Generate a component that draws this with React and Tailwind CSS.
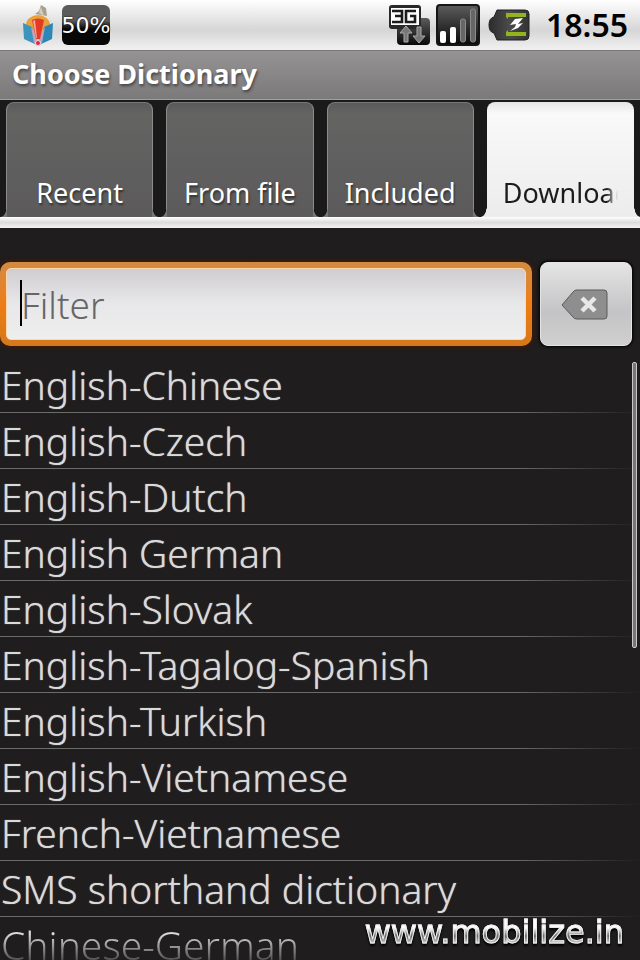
import React from "react";

const tabs = ["Recent", "From file", "Included", "Download"];

const dictionaries = [
  "English-Chinese",
  "English-Czech",
  "English-Dutch",
  "English German",
  "English-Slovak",
  "English-Tagalog-Spanish",
  "English-Turkish",
  "English-Vietnamese",
  "French-Vietnamese",
  "SMS shorthand dictionary",
  "Chinese-German",
];

function DictionaryIcon() {
  return (
    <svg width="32" height="44" viewBox="0 0 32 44" aria-hidden="true">
      <path d="M13 11l4-3 2-6 5 3 1 8z" fill="#aaa08f" />
      <path d="M17 10l2-6 3 9z" fill="#d6cdbd" />
      <ellipse cx="16" cy="22" rx="12" ry="10" fill="#eba13b" />
      <path d="M1 20l9 4 5 18L2 36z" fill="#3c93bb" />
      <path d="M31 20l-9 4-5 18 13-6z" fill="#2b87b3" />
      <path d="M9 24l4 6 3 8 3-8 4-6-3 16-4 3-4-3z" fill="#bfa3c1" />
      <path d="M10 17q6-3 12 0l-4 19h-4z" fill="#e23a24" />
      <path d="M11 18l2-1 2 18h-1z" fill="#f4a79b" />
      <circle cx="16" cy="40" r="2.500" fill="#d82748" stroke="#edd3dc" />
    </svg>
  );
}

function NetworkIcon() {
  return (
    <svg width="44" height="42" viewBox="0 0 44 42" aria-hidden="true">
      <defs>
        <linearGradient id="dark" x1="0" y1="0" x2="0" y2="1">
          <stop offset="0" stopColor="#5d5d5d" />
          <stop offset="1" stopColor="#080808" />
        </linearGradient>
      </defs>
      <rect x="9" y="14" width="33" height="27" rx="4" fill="url(#dark)" />
      <rect x="1" y="1" width="32" height="24" rx="3" fill="#292929" />
      <path d="M3 4h28v17H3z" fill="#fff" />
      <path d="M4 7h10v11H4M7 12h7M28 7H18v11h9v-6h-5" fill="none" stroke="#1c1c1c" strokeWidth="2.600" />
      <path d="M18 22l-6 7h4v9h4v-9h4zM31 39l-6-7h4v-9h4v9h4z" fill="#777" stroke="#aaa" />
    </svg>
  );
}

function SignalIcon() {
  return (
    <svg width="44" height="42" viewBox="0 0 44 42" aria-hidden="true">
      <rect x="1" y="1" width="42" height="40" rx="3" fill="url(#dark)" stroke="#161616" strokeWidth="2" />
      <rect x="4" y="27" width="6" height="12" rx="2" fill="#fff" />
      <rect x="14" y="23" width="6" height="16" rx="2" fill="#fff" />
      <rect x="24.500" y="15" width="5" height="23" rx="2" fill="#666" stroke="#8b8b8b" />
      <rect x="34.500" y="5" width="5" height="33" rx="2" fill="#666" stroke="#8b8b8b" />
    </svg>
  );
}

function BatteryIcon() {
  return (
    <svg width="42" height="32" viewBox="0 0 42 32" aria-hidden="true">
      <defs>
        <linearGradient id="cell" x1="0" y1="0" x2="1" y2="0">
          <stop offset="0" stopColor="#2c2c2c" />
          <stop offset=".5" stopColor="#4a4a4a" />
          <stop offset="1" stopColor="#333" />
        </linearGradient>
      </defs>
      <path d="M9 1h28q4 0 4 4v22q0 4-4 4H9l-3-7q-5-1-5-8t5-8z" fill="url(#cell)" stroke="#222" />
      <path d="M18 4h20v4H20v2l-2-2zM18 27h20v-4H20v-2l-2 2z" fill="#92b51c" />
      <path d="M35 9l-8 1-5 6 6-1-1 3-5 4 8-3 5-5-5 1z" fill="#fff" />
    </svg>
  );
}

function ClearIcon() {
  return (
    <svg width="50" height="34" viewBox="0 0 50 34" aria-hidden="true">
      <path d="M1 18L12 5q1-2 4-2h27q3 0 3 3v23q0 3-3 3H16q-3 0-4-2z" fill="#8e8e8e" stroke="#5a5a5a" />
      <path d="M21 11l13 13M34 11L21 24" stroke="#e8e8e8" strokeWidth="4.500" />
    </svg>
  );
}

function StatusBar() {
  return (
    <header className="flex h-[50px] items-center justify-between bg-linear-to-b from-white via-[#d6d6d6] via-60% to-[#f1f1f1] pr-3 pl-[22px]">
      <div className="flex items-center gap-2">
        <DictionaryIcon />
        <div className="flex h-10 w-12 items-center justify-center rounded-md bg-linear-to-b from-[#5b5b5b] from-40% to-[#080808] to-60% font-['DejaVu_Sans',sans-serif] text-[22px] text-white [text-shadow:0_0_2px_#000]">
          50%
        </div>
      </div>
      <div className="flex items-center gap-1">
        <NetworkIcon />
        <SignalIcon />
        <div className="flex items-center gap-4 pl-1">
          <BatteryIcon />
          <time className="text-[32px] leading-[50px] font-semibold text-black">18:55</time>
        </div>
      </div>
    </header>
  );
}

function TabBar() {
  return (
    <nav className="bg-[#1b1a1b]">
      <div role="tablist" className="grid grid-cols-4 gap-[13px] px-[6px] pt-[2px]">
        {tabs.map((label) => {
          const selected = label === "Download";
          return (
            <button
              key={label}
              type="button"
              role="tab"
              aria-selected={selected}
              className={
                "relative flex h-[115px] min-w-0 items-end rounded-t-lg pb-[6px] text-[27px] leading-9 before:absolute before:bottom-0 before:-left-[6px] before:h-3 before:w-[6px] after:absolute after:-right-[6px] after:bottom-0 after:h-3 after:w-[6px] " +
                (selected
                  ? "bg-linear-to-b from-[#e4e4e4] via-[#f9f9f9] via-10% to-[#ececec] px-4 text-[#1c1c1c] before:bg-[radial-gradient(6px_12px_at_0_0,transparent_95%,#ececec)] after:bg-[radial-gradient(6px_12px_at_100%_0,transparent_95%,#ececec)]"
                  : "border-x border-t border-x-[#8c8c8c] border-t-[#777] bg-linear-to-b from-[#5a5a5a] via-[#646463] via-10% to-[#5c5a5b] text-white [text-shadow:1px_2px_2px_#333] before:bg-[radial-gradient(6px_12px_at_0_0,transparent_95%,#777)] after:bg-[radial-gradient(6px_12px_at_100%_0,transparent_95%,#777)]")
              }
            >
              <span
                className={
                  "block w-full whitespace-nowrap " +
                  (selected
                    ? "overflow-hidden text-left [mask-image:linear-gradient(to_right,#000_90%,transparent)]"
                    : "text-center")
                }
              >
                {label}
              </span>
            </button>
          );
        })}
      </div>
      <div className="h-[11px] bg-linear-to-b from-white via-[#dcdcdc] to-[#f4f4f4]" />
    </nav>
  );
}

function FilterRow() {
  return (
    <form className="flex gap-2 pt-[34px] pr-2" onSubmit={(event) => event.preventDefault()}>
      <div className="relative min-w-0 flex-1 rounded-[10px] bg-linear-to-b from-[#d28b41] via-[#ee7d14] to-[#d5781b] p-[6px] shadow-[0_0_4px_1px_#4a1900]">
        <input
          type="text"
          aria-label="Filter"
          placeholder="Filter"
          className="block h-[72px] w-full rounded-[5px] border border-[#ffd9ad] bg-linear-to-b from-[#cfcdd0] via-[#e8e7e9] via-50% to-[#efeeef] px-[14px] text-[37px] font-light text-[#222] caret-transparent outline-none placeholder:text-[#666]"
        />
        <span className="absolute top-[18px] left-5 h-[46px] w-[2px] bg-black" />
      </div>
      <button
        type="button"
        aria-label="Clear filter"
        className="flex w-[92px] items-center justify-center rounded-lg border border-[#e4e4e4] bg-linear-to-b from-[#e5e5e5] via-[#c4c3c5] via-60% to-[#d0d0d0] shadow-[0_0_3px_1px_#000]"
      >
        <ClearIcon />
      </button>
    </form>
  );
}

function DictionaryList() {
  return (
    <main className="relative min-h-0 flex-1 overflow-hidden pt-[11px]">
      <ul>
        {dictionaries.map((name) => (
          <li
            key={name}
            className="h-14 pl-px text-[39px] leading-[56px] font-light whitespace-nowrap text-[#dadada] last:bg-linear-to-b last:from-[#dadada] last:from-30% last:to-[#4a4a4a] last:to-80% last:bg-clip-text last:text-transparent not-last:border-b not-last:[border-image:linear-gradient(to_right,#6c6c6c_80%,#1f1d1e)_1] not-last:[text-shadow:0_0_1px_#bbb]"
          >
            {name}
          </li>
        ))}
      </ul>
      <div className="absolute top-4 right-[3px] h-[286px] w-[5px] rounded-xs border border-[#c8c8c8] bg-[#777]" />
    </main>
  );
}

export default function App() {
  return (
    <div className="relative flex h-screen flex-col overflow-hidden bg-[#1f1d1e] font-['Noto_Sans',sans-serif]">
      <StatusBar />
      <h1 className="h-[50px] border-t border-b border-t-[#777] border-b-[#a0a0a0] bg-linear-to-b from-[#959394] to-[#7b797a] pl-3 text-[27px] leading-[46px] font-bold text-white [text-shadow:1px_2px_3px_#444]">
        Choose Dictionary
      </h1>
      <TabBar />
      <FilterRow />
      <DictionaryList />
      <div className="absolute right-4 bottom-2 bg-linear-to-b from-white from-40% via-[#666] via-60% to-[#ddd] to-80% bg-clip-text font-['DejaVu_Sans',sans-serif] text-[32px] leading-10 text-transparent [-webkit-text-stroke:1px_#eee] [filter:drop-shadow(0_2px_1px_#000)]">
        www.mobilize.in
      </div>
    </div>
  );
}
